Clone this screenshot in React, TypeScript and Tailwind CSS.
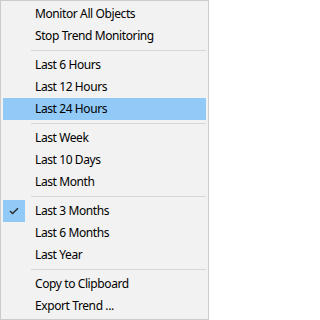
const groups: { label: string; checked?: boolean; active?: boolean }[][] = [
  [{ label: 'Monitor All Objects' }, { label: 'Stop Trend Monitoring' }],
  [{ label: 'Last 6 Hours' }, { label: 'Last 12 Hours' }, { label: 'Last 24 Hours', active: true }],
  [{ label: 'Last Week' }, { label: 'Last 10 Days' }, { label: 'Last Month' }],
  [{ label: 'Last 3 Months', checked: true }, { label: 'Last 6 Months' }, { label: 'Last Year' }],
  [{ label: 'Copy to Clipboard' }, { label: 'Export Trend ...' }],
];

function CheckIcon() {
  return (
    <svg width="10" height="8" viewBox="0 0 10 8" fill="none">
      <path d="M1 4 L3.6 6.6 L9 1.2" stroke="#2b2b2b" strokeWidth="1.4" />
    </svg>
  );
}

export default function App() {
  return (
    <div className="w-[209px] h-[320px] bg-[#f2f2f2] border border-[#cccccc] p-[2px] flex flex-col text-[12px] tracking-[-0.4px] text-black font-['Noto_Sans',sans-serif] select-none">
      {groups.map((items, gi) => (
        <div key={gi} className="flex flex-col">
          {gi > 0 && (
            <div className="h-[7px] flex items-center pl-[28px]">
              <div className="h-px w-full bg-[#d7d7d7]" />
            </div>
          )}
          {items.map((item) => (
            <div
              key={item.label}
              className={`h-[22px] flex items-center ${item.active ? 'bg-[#91c9f7]' : ''}`}
            >
              <div className="w-[22px] h-[22px] flex items-center justify-center">
                {item.checked && (
                  <div className="w-[22px] h-[22px] bg-[#91c9f7] flex items-center justify-center">
                    <CheckIcon />
                  </div>
                )}
              </div>
              <span className="ml-[10px] leading-none whitespace-nowrap">{item.label}</span>
            </div>
          ))}
        </div>
      ))}
    </div>
  );
}
